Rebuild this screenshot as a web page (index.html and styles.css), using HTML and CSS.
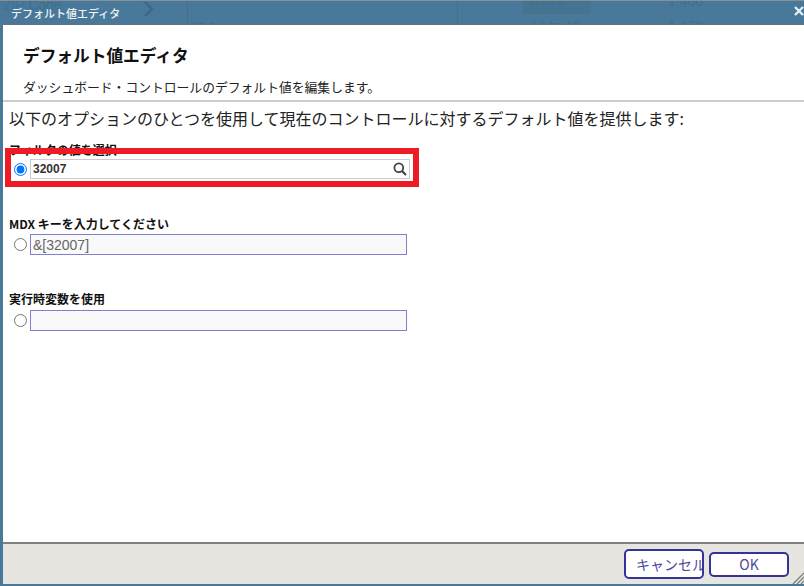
FILE: index.html
```html
<!DOCTYPE html>
<html lang="ja">
<head>
<meta charset="utf-8">
<title>デフォルト値エディタ</title>
<link rel="stylesheet" href="styles.css">
</head>
<body>
<div class="dialog">
  <div class="titlebar">
    <span class="ghost ghost-zip">ZIP Code</span>
    <span class="ghost ghost-zip2">ZIP Code</span>
    <i class="ghost-line line-1"></i>
    <i class="ghost-line line-2"></i>
    <i class="ghost-band"></i>
    <svg class="ghost-chevron" width="14" height="16" viewBox="0 0 14 16"><path d="M2 1l7 7-7 7h4l7-7-7-7z" fill="#3d6a8a"/></svg>
    <span class="ghost ghost-a">0 to 9</span>
    <span class="ghost ghost-b">1,400</span>
    <span class="ghost ghost-c">10 to 19</span>
    <span class="ghost ghost-d">1,470</span>
    <span class="title">デフォルト値エディタ</span>
    <svg class="close" width="10" height="10" viewBox="0 0 10 10"><path d="M1 1l8 8M9 1l-8 8" stroke="#e8eef2" stroke-width="2.4" fill="none"/></svg>
  </div>
  <div class="main">
    <header class="head">
      <h1>デフォルト値エディタ</h1>
      <p>ダッシュボード・コントロールのデフォルト値を編集します。</p>
    </header>
    <div class="body">
      <p class="prompt">以下のオプションのひとつを使用して現在のコントロールに対するデフォルト値を提供します:</p>
      <section class="opt opt-first">
        <label class="lbl">フィルタの値を選択</label>
        <div class="row">
          <input class="radio" type="radio" name="o" checked>
          <div class="search">
            <span>32007</span>
            <svg width="14" height="14" viewBox="0 0 14 14"><circle cx="5.8" cy="5.8" r="4.4" fill="none" stroke="#444" stroke-width="1.8"/><path d="M9 9l4 4" stroke="#444" stroke-width="2.2"/></svg>
          </div>
        </div>
      </section>
      <section class="opt opt-mdx">
        <label class="lbl">MDX キーを入力してください</label>
        <div class="row">
          <input class="radio" type="radio" name="o">
          <input class="field" type="text" value="&amp;[32007]">
        </div>
      </section>
      <section class="opt opt-var">
        <label class="lbl">実行時変数を使用</label>
        <div class="row">
          <input class="radio" type="radio" name="o">
          <input class="field" type="text">
        </div>
      </section>
    </div>
    <footer class="foot">
      <button class="btn btn-cancel">キャンセル</button>
      <button class="btn btn-ok">OK</button>
      <svg class="grip" width="12" height="12" viewBox="0 0 12 12"><path d="M12 1L1 12M12 5L5 12M12 9L9 12" stroke="#777" stroke-width="1.2"/></svg>
    </footer>
  </div>
  <div class="highlight"></div>
</div>
</body>
</html>
```
FILE: styles.css
```css
* { box-sizing: border-box; }
html, body { margin: 0; height: 100%; overflow: hidden; }
body { font-family: "Noto Sans CJK JP", "Liberation Sans", sans-serif; color: #111; background: #fff; }
.dialog { position: relative; width: 804px; height: 586px; display: flex; flex-direction: column; background: #48799a; border-left: 3px solid #48799a; border-bottom: 2px solid #48799a; }
.titlebar { position: relative; margin-left: -3px; height: 25px; flex: none; background: #48799a; border-top: 1px solid #8a8f94; border-bottom: 1px solid #6b7277; overflow: hidden; }
.title { position: absolute; left: 11px; top: 3px; font-size: 11px; line-height: 18px; font-weight: 500; color: #f2f2f2; }
.close { position: absolute; left: 794px; top: 5px; }
.ghost { position: absolute; font-family: "Liberation Sans", sans-serif; font-size: 14px; line-height: 16px; color: #3f6f90; }
.ghost-zip { left: 3px; top: -4px; }
.ghost-zip2 { left: 190px; top: 19px; font-size: 10px; }
.ghost-a { left: 530px; top: -8px; }
.ghost-b { left: 668px; top: -8px; }
.ghost-c { left: 530px; top: 17px; }
.ghost-d { left: 668px; top: 17px; }
.ghost-line { position: absolute; top: 0; width: 1px; height: 23px; background: #42708f; }
.line-1 { left: 187px; }
.line-2 { left: 457px; }
.ghost-band { position: absolute; left: 523px; top: 0; width: 68px; height: 13px; background: #44748f; }
.ghost-chevron { position: absolute; left: 141px; top: 0; }
.main { flex: 1; display: flex; flex-direction: column; background: #fff; min-height: 0; }
.head { height: 77px; padding: 18px 0 0 20px; border-bottom: 2px solid #ccc; }
.head h1 { margin: 0; font-size: 16.7px; line-height: 24px; font-weight: 700; color: #111; }
.head p { margin: 11px 0 0; font-size: 12.8px; line-height: 18px; color: #222; }
.body { flex: 1; padding: 4px 0 0 6px; min-height: 0; }
.prompt { margin: 0; font-size: 16px; line-height: 24px; color: #222; white-space: nowrap; }
.opt { display: flex; flex-direction: column; }
.opt-first { margin-top: 12px; }
.opt-mdx { margin-top: 37px; }
.opt-var { margin-top: 36px; }
.lbl { font-size: 12px; line-height: 16px; font-weight: 700; color: #111; }
.row { display: flex; align-items: center; padding-left: 5px; margin-top: 1px; }
.opt-mdx .row { margin-top: 2px; }
.opt-var .row { margin-top: 3px; }
.radio { margin: 0 3px 0 0; width: 13px; height: 13px; flex: none; }
.search { width: 380px; height: 20px; border: 1px solid #ccc; display: flex; align-items: center; justify-content: space-between; padding: 0 2px; font-family: "Liberation Sans", sans-serif; font-size: 12px; font-weight: 700; color: #333; }
.field { width: 377px; height: 21px; border: 1px solid #8080d0; border-radius: 0; background: #f9f9f9; padding: 0 2px; font-family: "Liberation Sans", sans-serif; font-size: 14px; color: #666; outline: none; }
.foot { position: relative; height: 42px; flex: none; background: #e6e5e0; border-top: 2px solid #808080; display: flex; align-items: center; justify-content: flex-end; gap: 5px; padding: 0 15px 0 0; }
.btn { padding: 0; background: #fff; border: 2px solid #333399; border-radius: 5px; width: 80px; font-family: "Noto Sans CJK JP", "Liberation Sans", sans-serif; font-size: 14px; color: #4a4a9a; white-space: nowrap; overflow: hidden; }
.btn-cancel { height: 30px; padding-left: 10px; text-align: left; }
.btn-ok { height: 25px; line-height: 20px; }
.grip { position: absolute; right: 0; bottom: 0; }
.highlight { position: absolute; left: 2px; top: 148px; width: 414px; height: 39px; border: 6px solid #ed1c24; pointer-events: none; }
```
